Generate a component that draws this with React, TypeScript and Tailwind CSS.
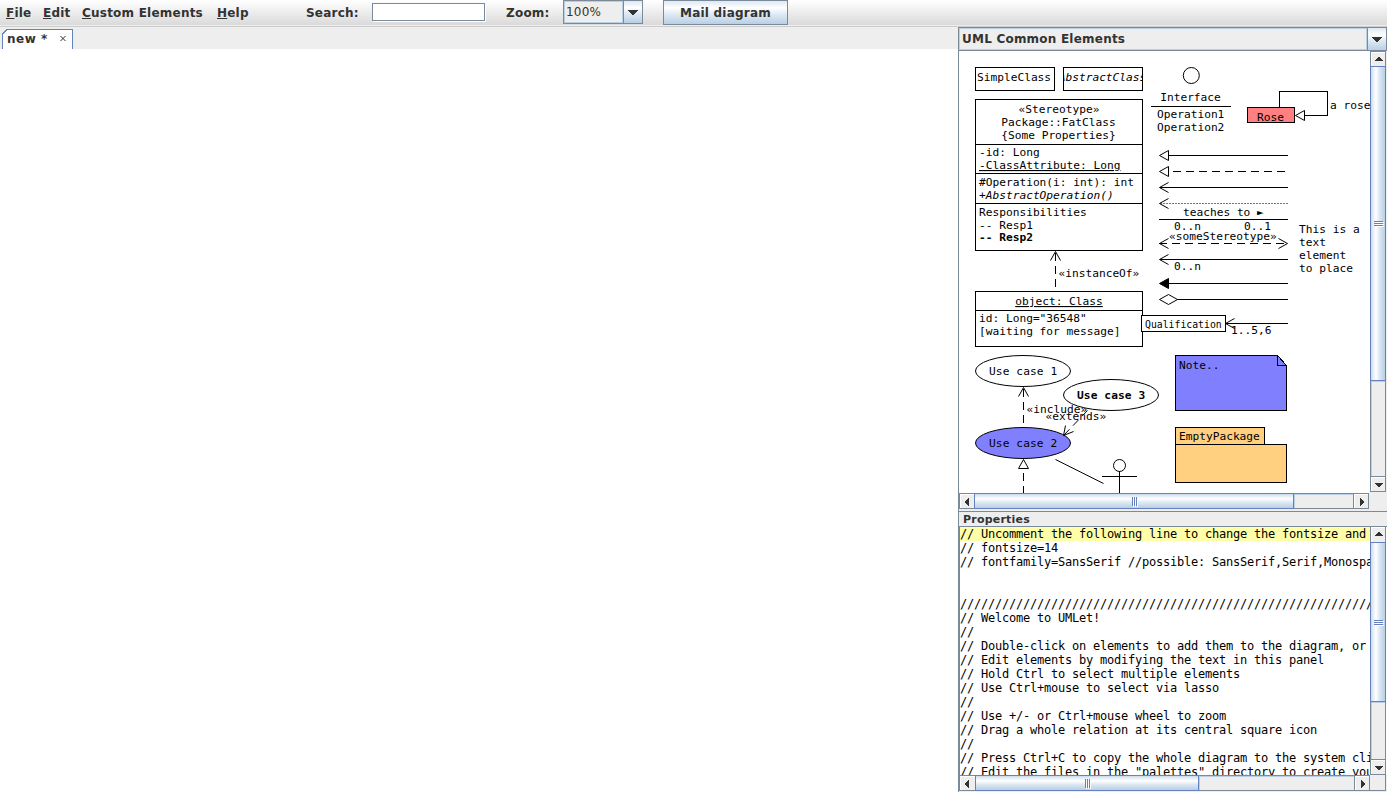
import type { ReactNode } from "react";

const STEEL_V =
  "bg-[linear-gradient(180deg,#dde8f3_0%,#ffffff_30%,#dde8f3_60%,#b8cfe5_100%)]";
const STEEL_H =
  "bg-[linear-gradient(90deg,#c8d9eb_0%,#dde8f3_10%,#ffffff_35%,#dde8f3_60%,#b8cfe5_100%)]";
const STEEL_THUMB =
  "bg-[linear-gradient(180deg,#c8d9eb_0%,#dde8f3_10%,#ffffff_35%,#dde8f3_60%,#b8cfe5_100%)]";

type Dir = "up" | "down" | "left" | "right";

const ARROWS: Record<Dir, string> = {
  up: "M3 0h2v1h1v1h1v1h1v1H0V3h1V2h1V1h1z",
  down: "M0 0h8v1H7v1H6v1H5v1H3V3H2V2H1V1H0z",
  left: "M0 3h1V2h1V1h1V0h1v8H3V7H2V6H1V5H0z",
  right: "M0 0h1v1h1v1h1v1h1v2H3v1H2v1H1v1H0z",
};

function Arrow({ dir }: { dir: Dir }) {
  const vertical = dir === "up" || dir === "down";
  return (
    <svg
      width={vertical ? 8 : 4}
      height={vertical ? 4 : 8}
      shapeRendering="crispEdges"
      className="block"
    >
      <path d={ARROWS[dir]} fill="#333333" />
    </svg>
  );
}

function ComboArrow() {
  return (
    <svg width="10" height="5" shapeRendering="crispEdges" className="block">
      <path d="M0 0h10v1H9v1H8v1H7v1H6v1H4V4H3V3H2V2H1V1H0z" fill="#333333" />
    </svg>
  );
}

function Grip({ vertical }: { vertical: boolean }) {
  return (
    <svg
      width={vertical ? 10 : 6}
      height={vertical ? 6 : 10}
      shapeRendering="crispEdges"
      className="block"
    >
      {[0, 2, 4].map((n) =>
        vertical ? (
          <g key={n}>
            <path d={`M0 ${n + 0.5}H9`} stroke="#6382bf" />
            <path d={`M1 ${n + 1.5}H10`} stroke="#ffffff" />
          </g>
        ) : (
          <g key={n}>
            <path d={`M${n + 0.5} 0V9`} stroke="#6382bf" />
            <path d={`M${n + 1.5} 1V10`} stroke="#ffffff" />
          </g>
        )
      )}
    </svg>
  );
}

function VScroll({ cls, button, thumb }: { cls: string; button: string; thumb: string }) {
  return (
    <div className={`flex w-4 shrink-0 flex-col border-x border-[#7a8a99] bg-[#eeeeee] ${cls}`}>
      <div className={`shrink-0 border-l border-t border-white pl-[3px] pt-1 ${button}`}>
        <Arrow dir="up" />
      </div>
      <div
        className={`-mx-px flex shrink-0 items-center justify-center border border-[#6382bf] pl-0.5 pt-px ${STEEL_H} ${thumb}`}
      >
        <Grip vertical />
      </div>
      <div className="min-h-0 grow border-l border-t border-[#b8cfe5]" />
      <div className="h-4 shrink-0 border-y border-[#7a8a99] pl-1 pt-1.5 shadow-[inset_1px_1px_0_#ffffff]">
        <Arrow dir="down" />
      </div>
    </div>
  );
}

function HScroll({ cls, button, thumb }: { cls: string; button: string; thumb: string }) {
  return (
    <div className={`flex h-4 w-[410px] shrink-0 border-y border-[#7a8a99] bg-[#eeeeee] ${cls}`}>
      <div className={`shrink-0 border-l border-t border-white pl-1 pt-[3px] ${button}`}>
        <Arrow dir="left" />
      </div>
      <div
        className={`-my-px flex shrink-0 items-center justify-center border border-[#6382bf] pl-0.5 pt-0.5 ${STEEL_THUMB} ${thumb}`}
      >
        <Grip vertical={false} />
      </div>
      <div className="min-w-0 grow border-l border-t border-[#b8cfe5]" />
      <div className="w-4 shrink-0 border-x border-[#7a8a99] pl-1.5 pt-1 shadow-[inset_1px_1px_0_#ffffff]">
        <Arrow dir="right" />
      </div>
    </div>
  );
}

function T({
  x,
  y,
  children,
  mid,
  cls = "",
}: {
  x: number;
  y: number;
  children: ReactNode;
  mid?: boolean;
  cls?: string;
}) {
  return (
    <text x={x} y={y} textAnchor={mid ? "middle" : "start"} className={cls} stroke="none" fill="#000">
      {children}
    </text>
  );
}

function Palette() {
  return (
    <svg
      width="410"
      height="442"
      viewBox="960 51 410 442"
      fill="none"
      stroke="#000"
      className="block shrink-0 whitespace-pre font-['DejaVu_Sans_Mono',monospace] text-[11.2px] font-normal tracking-normal"
    >
      <clipPath id="abstract">
        <rect x="1063" y="67" width="79" height="24" />
      </clipPath>
      <g shapeRendering="crispEdges">
        <rect x="975.5" y="67.5" width="79" height="23" />
        <rect x="1063.5" y="67.5" width="79" height="23" />
        <rect x="975.5" y="99.5" width="167" height="151" />
        <path d="M975 144.5H1142M975 173.5H1142M975 203.5H1142" />
        <rect x="975.5" y="291.5" width="167" height="55" />
        <path d="M975 310.5H1142M1151 106.5H1231" />
        <path d="M1279.5 107V91.5H1327.5V115.5H1305" />
        <rect x="1247.5" y="107.5" width="47" height="15" fill="#ff8080" />
        <path d="M1168 155.5H1288M1160 187.5H1288M1159 219.5H1288M1160 259.5H1288M1168 283.5H1288M1177 299.5H1288M1226 323.5H1288" />
        <path d="M1173 171.5H1288M1159 243.5H1288" strokeDasharray="8 5" />
        <path d="M1160 203.5H1288" strokeDasharray="2 1" stroke="#777" />
        <rect x="1141.5" y="315.5" width="84" height="16" fill="#fff" />
        <path d="M1055.5 287V252M1023.5 423V388" strokeDasharray="8 5" />
        <path d="M1023.5 473V493" strokeDasharray="8 5" />
        <path d="M1175.5 355.5H1277.5L1286.5 365.5V410.5H1175.5Z" fill="#8080ff" />
        <path d="M1277.5 355.5V365.5H1286.5" />
        <rect x="1175.5" y="427.5" width="89" height="17" fill="#ffd080" />
        <rect x="1175.5" y="444.5" width="111" height="38" fill="#ffd080" />
        <path d="M1102 476.5H1137M1119.5 471V493" />
      </g>
      <circle cx="1191.3" cy="75.5" r="8" />
      <path d="M1304.5 110.5L1295.5 115.5L1304.5 120.5Z" fill="#fff" />
      <path d="M1168.5 150.5L1159.5 155.5L1168.5 160.5Z" />
      <path d="M1168.5 166.5L1159.5 171.5L1168.5 176.5Z" />
      <path d="M1168.5 182.5L1159.5 187.5L1168.5 192.5" />
      <path d="M1168.5 198.5L1159.5 203.5L1168.5 208.5" />
      <path d="M1168.5 238.5L1159.5 243.5L1168.5 248.5" />
      <path d="M1278.5 238.5L1287.5 243.5L1278.5 248.5" />
      <path d="M1168.5 254.5L1159.5 259.5L1168.5 264.5" />
      <path d="M1168.5 278.5L1159.5 283.5L1168.5 288.5Z" fill="#000" />
      <path d="M1159.5 299.5L1168.5 294.5L1177.5 299.5L1168.5 304.5Z" />
      <path d="M1234.5 318.5L1225.5 323.5L1234.5 328.5" />
      <path d="M1050.5 260.5L1055.5 251.5L1060.5 260.5" />
      <path d="M1018.5 396.5L1023.5 387.5L1028.5 396.5" />
      <path d="M1018.5 468.5L1023.5 459.5L1028.5 468.5Z" />
      <ellipse cx="1023" cy="371" rx="47.5" ry="15.5" />
      <ellipse cx="1023" cy="443" rx="47.5" ry="15.5" fill="#8080ff" />
      <ellipse cx="1111" cy="395" rx="47.5" ry="15.5" />
      <path d="M1087.5 410.5L1063.5 435.5" strokeDasharray="8 5" />
      <path d="M1065.5 425.5L1063.5 435.5L1073.5 431.5" />
      <path d="M1055.5 459.5L1103.5 483.5" />
      <circle cx="1119.5" cy="465.5" r="6" />

      <T x={977} y={81}>SimpleClass</T>
      <g clipPath="url(#abstract)">
        <T x={1102.5} y={81} mid cls="italic">AbstractClass</T>
      </g>
      <T x={1059} y={113} mid>«Stereotype»</T>
      <T x={1058.5} y={126} mid>Package::FatClass</T>
      <T x={1058.5} y={139} mid>{"{Some Properties}"}</T>
      <T x={979} y={156}>-id: Long</T>
      <T x={979} y={169} cls="underline">-ClassAttribute: Long</T>
      <T x={979} y={186}>#Operation(i: int): int</T>
      <T x={979} y={199} cls="italic">+AbstractOperation()</T>
      <T x={979} y={216}>Responsibilities</T>
      <T x={979} y={229}>-- Resp1</T>
      <T x={979} y={241} cls="font-bold">-- Resp2</T>
      <T x={1058.5} y={277}>«instanceOf»</T>
      <T x={1059} y={305} mid cls="underline">object: Class</T>
      <T x={979} y={322}>id: Long="36548"</T>
      <T x={979} y={335}>[waiting for message]</T>
      <T x={1190.5} y={101} mid>Interface</T>
      <T x={1157} y={118}>Operation1</T>
      <T x={1157} y={131}>Operation2</T>
      <T x={1257} y={121}>Rose</T>
      <T x={1330} y={109}>a rose</T>
      <T x={1183} y={216}>teaches to ►</T>
      <T x={1174} y={230}>0..n</T>
      <T x={1244} y={230}>0..1</T>
      <T x={1169} y={240}>«someStereotype»</T>
      <T x={1174} y={270}>0..n</T>
      <T x={1145} y={328} cls="text-[9.8px]">Qualification</T>
      <T x={1231} y={334}>1..5,6</T>
      <T x={1299} y={233}>This is a</T>
      <T x={1299} y={246}>text</T>
      <T x={1299} y={259}>element</T>
      <T x={1299} y={272}>to place</T>
      <T x={989} y={375} cls="tracking-[0.1px]">Use case 1</T>
      <T x={989} y={447} cls="tracking-[0.1px]">Use case 2</T>
      <T x={1077} y={399} cls="font-bold tracking-[0.1px]">Use case 3</T>
      <T x={1026.5} y={413}>«include»</T>
      <T x={1045.5} y={420}>«extends»</T>
      <T x={1179} y={369}>Note..</T>
      <T x={1179} y={440}>EmptyPackage</T>
    </svg>
  );
}

const LINES = [
  "// Uncomment the following line to change the fontsize and font:",
  "// fontsize=14",
  "// fontfamily=SansSerif //possible: SansSerif,Serif,Monospaced",
  "",
  "",
  "//////////////////////////////////////////////////////////////",
  "// Welcome to UMLet!",
  "//",
  "// Double-click on elements to add them to the diagram, or to copy them",
  "// Edit elements by modifying the text in this panel",
  "// Hold Ctrl to select multiple elements",
  "// Use Ctrl+mouse to select via lasso",
  "//",
  "// Use +/- or Ctrl+mouse wheel to zoom",
  "// Drag a whole relation at its central square icon",
  "//",
  "// Press Ctrl+C to copy the whole diagram to the system clipboard",
  '// Edit the files in the "palettes" directory to create your own',
];

function MenuItem({ label, cls }: { label: string; cls: string }) {
  return (
    <span className={`shrink-0 ${cls}`}>
      <span className="underline underline-offset-1">{label[0]}</span>
      {label.slice(1)}
    </span>
  );
}

export default function App() {
  return (
    <div className="flex h-[792px] w-[1387px] flex-col overflow-hidden whitespace-nowrap bg-[#eeeeee] font-['DejaVu_Sans',sans-serif] text-[12px] font-bold tracking-[0.22px] text-[#333333]">
      <header className="flex h-[27px] shrink-0 items-start border-b border-[#cccccc] bg-[linear-gradient(180deg,#ffffff_0px,#dadada_25px,#eeeeee_25px)] leading-[26px]">
        <MenuItem label="File" cls="ml-1.5 w-[37px]" />
        <MenuItem label="Edit" cls="w-[39px]" />
        <MenuItem label="Custom Elements" cls="w-[135px]" />
        <MenuItem label="Help" cls="w-[89px]" />
        <span className="w-[66px] shrink-0">Search:</span>
        <div className="mt-[3px] h-[18px] w-[113px] shrink-0 border border-[#7a8a99] bg-white shadow-[1px_1px_0_#ffffff]" />
        <span className="ml-[21px] w-[57px] shrink-0">Zoom:</span>
        <div className="flex h-6 w-20 shrink-0 border border-[#7a8a99]">
          <div className="w-[59px] shrink-0 border border-[#b8cfe5] bg-[#eeeeee] pl-px font-normal leading-[20px]">
            100%
          </div>
          <div className={`flex grow items-center justify-center border-l border-[#7a8a99] pt-px ${STEEL_V}`}>
            <ComboArrow />
          </div>
        </div>
        <div className={`ml-5 h-[25px] w-[125px] shrink-0 border border-[#7a8a99] text-center leading-[24px] ${STEEL_V}`}>
          Mail diagram
        </div>
      </header>

      <main className="flex min-h-0 grow">
        <section className="flex w-[958px] shrink-0 flex-col">
          <div className="flex h-[22px] shrink-0 pl-0.5 pt-0.5">
            <div className="relative flex h-5 w-[71px] justify-between border-x border-t border-[#6382bf] bg-white pl-1 pr-1.5 leading-[18px]">
              <svg className="absolute -left-px -top-px" width="6" height="6" shapeRendering="crispEdges">
                <path d="M0 0H6L0 6Z" fill="#eeeeee" />
                <path d="M0 5.5L5.5 0" stroke="#6382bf" />
              </svg>
              <span className="tracking-[0.5px]">new *</span>
              <svg className="mt-1.5" width="6" height="5" stroke="#333333">
                <path d="M0.5 0L5.5 5M5.5 0L0.5 5" />
              </svg>
            </div>
          </div>
          <div className="grow bg-white" />
        </section>

        <aside className="flex min-w-0 grow flex-col border-l border-[#7a8a99]">
          <div className="flex h-6 shrink-0 border border-l-0 border-[#7a8a99]">
            <div className="w-[408px] shrink-0 border border-[#b8cfe5] pl-0.5 leading-[20px]">
              UML Common Elements
            </div>
            <div className={`flex grow items-center justify-center border-l border-[#7a8a99] pt-px ${STEEL_V}`}>
              <ComboArrow />
            </div>
          </div>

          <div className="flex h-[442px] shrink-0">
            <div className="bg-white pl-px">
              <Palette />
            </div>
            <VScroll cls="h-[441px] border-t" button="h-[14px]" thumb="h-[315px]" />
          </div>
          <div className="flex h-[18px] shrink-0">
            <HScroll cls="border-l" button="w-[14px]" thumb="w-[320px]" />
          </div>

          <div className="h-4 shrink-0 border-y border-[#7a8a99] pl-1 text-[11px] leading-[15px]">
            Properties
          </div>
          <div className="flex h-[248px] shrink-0 border-l border-[#7a8a99] bg-white">
            <pre className="w-[410px] shrink-0 overflow-hidden font-['DejaVu_Sans_Mono',monospace] text-[12px] font-normal leading-[14px] tracking-[-0.224px] text-black">
              {LINES.map((line, i) => (
                <div key={i} className={`h-3.5 ${i === 0 ? "bg-[#ffffaa]" : ""}`}>
                  {line}
                </div>
              ))}
            </pre>
            <VScroll cls="" button="h-[15px]" thumb="h-[160px]" />
          </div>
          <div className="flex shrink-0 border-l border-[#7a8a99]">
            <HScroll cls="" button="w-[15px]" thumb="w-[224px]" />
            <div className="w-4 border-b border-r border-[#7a8a99]" />
          </div>
        </aside>
      </main>
    </div>
  );
}
